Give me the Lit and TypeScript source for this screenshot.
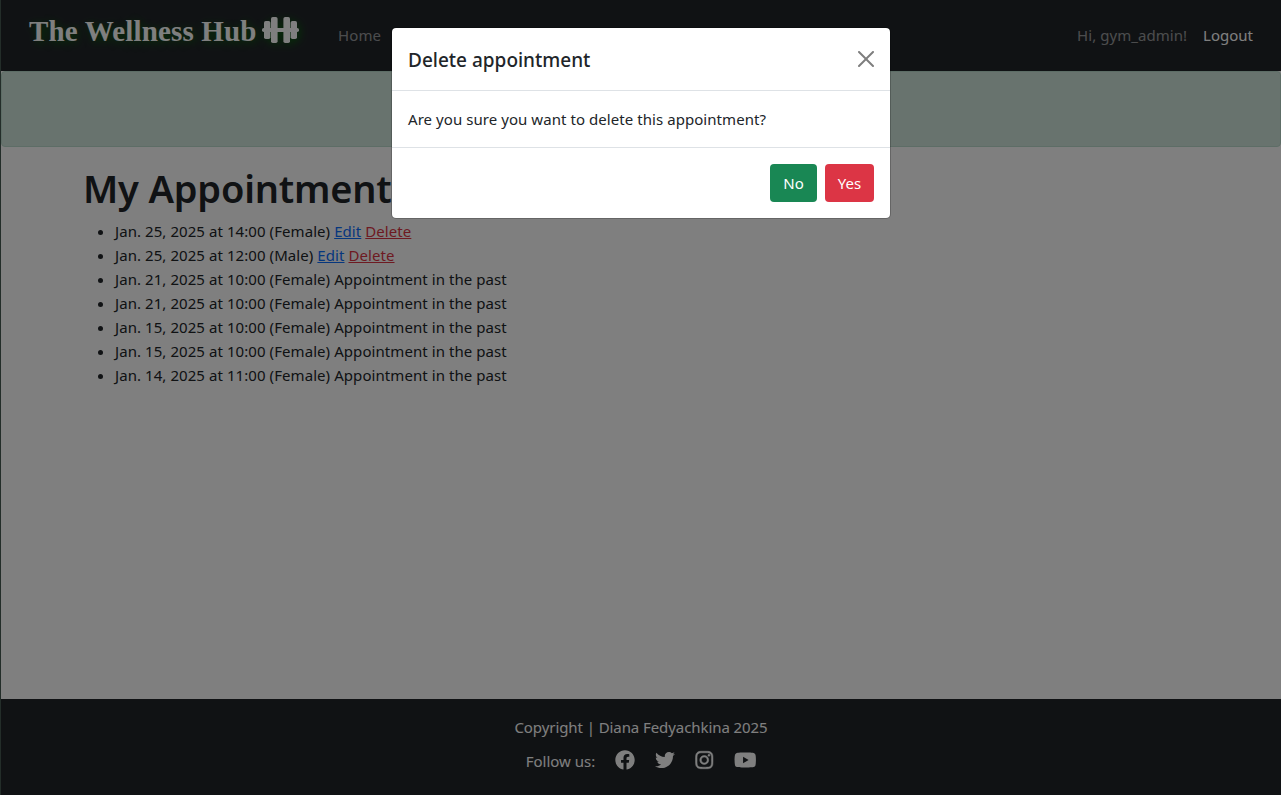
import { LitElement, html, css, svg } from "lit";
import { customElement } from "lit/decorators.js";

interface Appointment {
  when: string;
  trainer: string;
  past: boolean;
}

const APPOINTMENTS: Appointment[] = [
  { when: "Jan. 25, 2025 at 14:00", trainer: "Female", past: false },
  { when: "Jan. 25, 2025 at 12:00", trainer: "Male", past: false },
  { when: "Jan. 21, 2025 at 10:00", trainer: "Female", past: true },
  { when: "Jan. 21, 2025 at 10:00", trainer: "Female", past: true },
  { when: "Jan. 15, 2025 at 10:00", trainer: "Female", past: true },
  { when: "Jan. 15, 2025 at 10:00", trainer: "Female", past: true },
  { when: "Jan. 14, 2025 at 11:00", trainer: "Female", past: true },
];

const SOCIAL = [
  { w: 20, s: 0, box: "0 0 512 512", d: "M504 256C504 119 393 8 256 8S8 119 8 256c0 123.78 90.69 226.38 209.25 245V327.69h-63V256h63v-54.64c0-62.15 37-96.48 93.67-96.48 27.14 0 55.52 4.84 55.52 4.84v61h-31.28c-30.8 0-40.41 19.12-40.41 38.73V256h68.78l-11 71.69h-57.78V501C413.31 482.38 504 379.78 504 256z" },
  { w: 20, s: 0, box: "0 0 512 512", d: "M459.37 151.716c.325 4.548.325 9.097.325 13.645 0 138.72-105.583 298.558-298.558 298.558-59.452 0-114.68-17.219-161.137-47.106 8.447.974 16.568 1.299 25.34 1.299 49.055 0 94.213-16.568 130.274-44.832-46.132-.975-84.792-31.188-98.112-72.772 6.498.974 12.995 1.624 19.818 1.624 9.421 0 18.843-1.3 27.614-3.573-48.081-9.747-84.143-51.98-84.143-102.985v-1.299c13.969 7.797 30.214 12.67 47.431 13.319-28.264-18.843-46.781-51.005-46.781-87.391 0-19.492 5.197-37.36 14.294-52.954 51.655 63.675 129.3 105.258 216.365 109.807-1.624-7.797-2.599-15.918-2.599-24.04 0-57.828 46.782-104.934 104.934-104.934 30.213 0 57.502 12.67 76.67 33.137 23.715-4.548 46.456-13.32 66.599-25.34-7.798 24.366-24.366 44.833-46.132 57.827 21.117-2.273 41.584-8.122 60.426-16.243-14.292 20.791-32.161 39.308-52.628 54.253z" },
  { w: 18.5, s: 12, box: "-6 0 460 512", d: "M224.1 141c-63.6 0-114.9 51.3-114.9 114.9s51.3 114.9 114.9 114.9S339 319.5 339 255.9 287.7 141 224.1 141zm0 189.6c-41.1 0-74.7-33.5-74.7-74.7s33.5-74.7 74.7-74.7 74.7 33.5 74.7 74.7-33.6 74.7-74.7 74.7zm146.4-194.3c0 14.9-12 26.8-26.8 26.8-14.9 0-26.8-12-26.8-26.8s12-26.8 26.8-26.8 26.8 12 26.8 26.8zm76.1 27.2c-1.7-35.9-9.9-67.7-36.2-93.9-26.2-26.2-58-34.4-93.9-36.2-37-2.1-147.9-2.1-184.9 0-35.8 1.7-67.6 9.9-93.9 36.1s-34.4 58-36.2 93.9c-2.1 37-2.1 147.9 0 184.9 1.7 35.9 9.9 67.7 36.2 93.9s58 34.4 93.9 36.2c37 2.1 147.9 2.1 184.9 0 35.9-1.7 67.7-9.9 93.9-36.2 26.2-26.2 34.4-58 36.2-93.9 2.1-37 2.1-147.8 0-184.8zM398.8 388c-7.8 19.6-22.9 34.7-42.6 42.6-29.5 11.7-99.5 9-132.1 9s-102.7 2.6-132.1-9c-19.6-7.8-34.7-22.9-42.6-42.6-11.7-29.5-9-99.5-9-132.1s-2.6-102.7 9-132.1c7.8-19.6 22.9-34.7 42.6-42.6 29.5-11.7 99.5-9 132.1-9s102.7-2.6 132.1 9c19.6 7.8 34.7 22.9 42.6 42.6 11.7 29.5 9 99.5 9 132.1s2.7 102.7-9 132.1z" },
  { w: 22.5, s: 0, box: "0 0 576 512", d: "M549.655 124.083c-6.281-23.65-24.787-42.276-48.284-48.597C458.781 64 288 64 288 64S117.22 64 74.629 75.486c-23.497 6.322-42.003 24.947-48.284 48.597-11.412 42.867-11.412 132.305-11.412 132.305s0 89.438 11.412 132.305c6.281 23.65 24.787 41.5 48.284 47.821C117.22 448 288 448 288 448s170.78 0 213.371-11.486c23.497-6.321 42.003-24.171 48.284-47.821 11.412-42.867 11.412-132.305 11.412-132.305s0-89.438-11.412-132.305zm-317.51 213.508V175.185l142.739 81.205-142.739 81.201z" },
];

@customElement("app-root")
export class AppRoot extends LitElement {
  static styles = css`
    :host {
      display: block;
      height: 795px;
      overflow: hidden;
      position: relative;
      font: 15px/24px "Noto Sans", "Open Sans", sans-serif;
      color: #212529;
      background: #fff;
    }
    * { box-sizing: border-box; }
    .page {
      display: flex;
      flex-direction: column;
      height: 795px;
      border-left: 1px solid #475a53;
    }
    .nav {
      display: flex;
      align-items: center;
      height: 71px;
      padding: 0 28px 2px;
      background: #212529;
      color: #fff;
      flex: none;
    }
    .brand {
      display: flex;
      align-items: center;
      gap: 6px;
      height: 39px;
      margin: -9px 39px 0 0;
      font: bold 29px/39px "Liberation Serif", serif;
      text-shadow: 2px 2px 8px rgba(0, 128, 0, 0.7);
    }
    .name { width: 227px; padding-top: 2px; white-space: nowrap; letter-spacing: 0.16px; }
    .dumbbell {
      display: block;
      overflow: visible;
      filter: drop-shadow(2px 2px 4px rgba(0, 128, 0, 0.6));
    }
    .home { color: rgba(255, 255, 255, 0.55); flex: 1; letter-spacing: 0.1px; }
    .hello { color: rgba(255, 255, 255, 0.55); margin-right: 16px; letter-spacing: 0.05px; }
    .alert {
      flex: none;
      height: 76px;
      background: #d1e7dd;
      border: 1px solid #badbcc;
      border-radius: 4px;
    }
    .main { flex: 1; padding: 17px 83px 0 82px; }
    h1 {
      margin: 0 0 7px;
      font-size: 38px;
      line-height: 48px;
      font-weight: 600;
      letter-spacing: -0.2px;
      white-space: nowrap;
    }
    ul { margin: 0; padding-left: 32px; letter-spacing: 0.07px; }
    .edit { color: #0d6efd; text-decoration: underline; }
    .delete { color: #dc3545; text-decoration: underline; }
    .footer {
      flex: none;
      height: 96px;
      padding-top: 16px;
      background: #212529;
      color: #fff;
      display: flex;
      flex-direction: column;
      align-items: center;
      gap: 10px;
    }
    .copy { letter-spacing: -0.08px; }
    .follow { display: flex; align-items: center; gap: 20px; }
    .icon { display: block; margin-top: -3px; }
    .backdrop {
      position: absolute;
      inset: 0;
      background: rgba(0, 0, 0, 0.5);
    }
    .dialog {
      position: absolute;
      top: 27px;
      left: 391px;
      width: 500px;
      background: #fff;
      background-clip: padding-box;
      border: 1px solid rgba(0, 0, 0, 0.2);
      border-radius: 5px;
    }
    .head {
      display: flex;
      align-items: center;
      justify-content: space-between;
      height: 63px;
      padding: 0 16px;
      border-bottom: 1px solid #dee2e6;
    }
    .title { font-size: 19px; line-height: 30px; font-weight: 500; padding-top: 2px; }
    .body { height: 56px; padding: 16px; letter-spacing: 0.06px; }
    .foot {
      display: flex;
      justify-content: flex-end;
      gap: 8px;
      height: 71px;
      padding: 16px;
      border-top: 1px solid #dee2e6;
    }
    .btn {
      width: 49px;
      height: 38px;
      border-radius: 4px;
      color: #fff;
      line-height: 39px;
      text-align: center;
    }
    .no { background: #198754; width: 47px; }
    .yes { background: #dc3545; }
  `;

  private row(a: Appointment) {
    return html`<li><span class="t">${a.when} (${a.trainer}) ${a.past
      ? "Appointment in the past"
      : html`<a class="edit">Edit</a> <a class="delete">Delete</a>`}</span></li>`;
  }

  render() {
    return html`
      <div class="page">
        <nav class="nav">
          <div class="brand">
            <span class="name">The Wellness Hub</span>
            <svg class="dumbbell" width="37" height="26" fill="#fff">
              <rect x="0" y="11" width="37" height="4" rx="1.8" />
              <rect x="2" y="4" width="6.4" height="18" rx="1.8" />
              <rect x="9" y="0" width="6.6" height="26" rx="1.8" />
              <rect x="21.4" y="0" width="6.6" height="26" rx="1.8" />
              <rect x="28.6" y="4" width="6.4" height="18" rx="1.8" />
            </svg>
          </div>
          <span class="home">Home</span>
          <span class="hello">Hi, gym_admin!</span>
          <span class="logout">Logout</span>
        </nav>
        <div class="alert"></div>
        <main class="main">
          <h1>My Appointments</h1>
          <ul>${APPOINTMENTS.map((a) => this.row(a))}</ul>
        </main>
        <footer class="footer">
          <div class="copy">Copyright | Diana Fedyachkina 2025</div>
          <div class="follow">
            <span class="label">Follow us:</span>
            ${SOCIAL.map((s) => html`<svg class="icon" width=${s.w} height="20" viewBox=${s.box} fill="#fff" stroke="#fff" stroke-width=${s.s}>${svg`<path d=${s.d} />`}</svg>`)}
          </div>
        </footer>
      </div>
      <div class="backdrop"></div>
      <div class="dialog" role="dialog">
        <div class="head">
          <span class="title">Delete appointment</span>
          <svg class="close" width="16" height="16" viewBox="0 0 16 16" fill="#000" opacity=".5">
            <path d="M.293.293a1 1 0 011.414 0L8 6.586 14.293.293a1 1 0 111.414 1.414L9.414 8l6.293 6.293a1 1 0 01-1.414 1.414L8 9.414l-6.293 6.293a1 1 0 01-1.414-1.414L6.586 8 .293 1.707a1 1 0 010-1.414z" />
          </svg>
        </div>
        <div class="body"><span class="ask">Are you sure you want to delete this appointment?</span></div>
        <div class="foot">
          <div class="btn no">No</div>
          <div class="btn yes">Yes</div>
        </div>
      </div>
    `;
  }
}
